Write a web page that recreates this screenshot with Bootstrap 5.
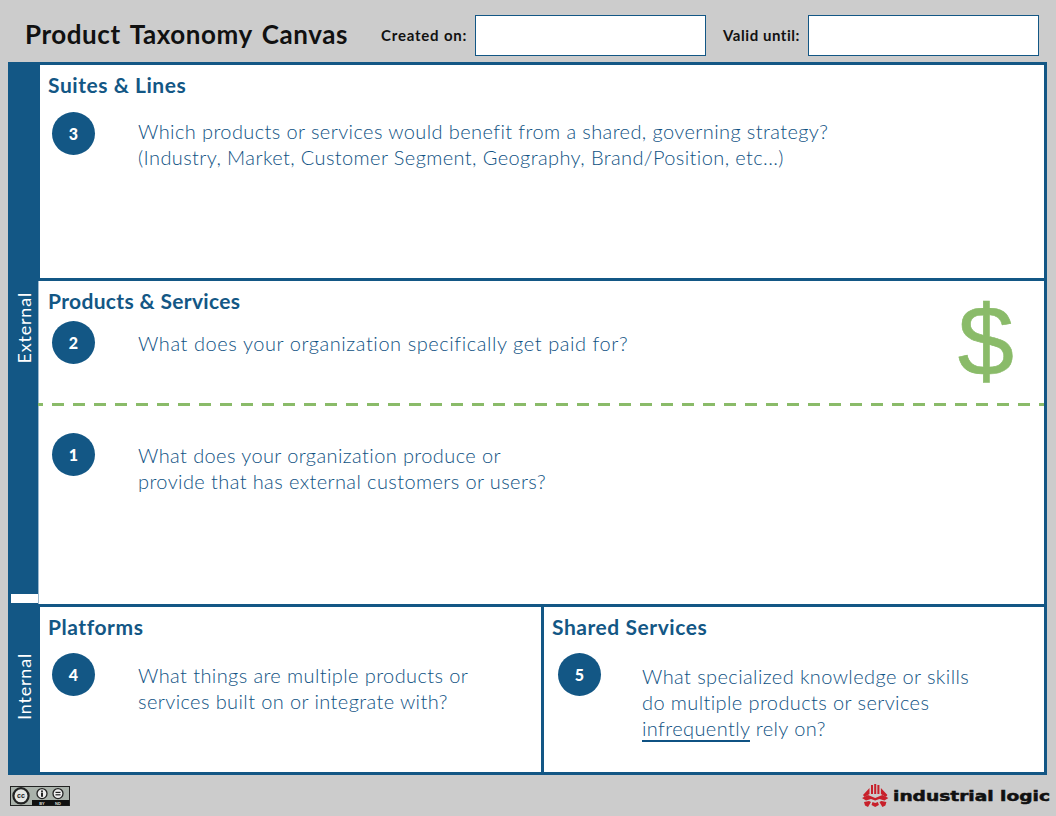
<!DOCTYPE html>
<html lang="en">
<head>
<meta charset="utf-8">
<title>Product Taxonomy Canvas</title>
<link href="https://cdn.jsdelivr.net/npm/bootstrap@5.3.0/dist/css/bootstrap.min.css" rel="stylesheet">
<style>
html,body{height:100%}
body{background:#ccc;font-family:"Lato",sans-serif;color:#135785;width:1056px;height:816px;overflow:hidden}
.tc-head{height:62px;padding:15px 9px 0 25px}
.tc-title{font-size:26px;font-weight:700;color:#111;letter-spacing:.55px;word-spacing:3px;margin:0;line-height:38px;width:339px;flex:none;white-space:nowrap}
.tc-lab{font-size:15px;font-weight:700;color:#111;line-height:40px;white-space:nowrap;flex:none}
.tc-lab1{width:111px;padding-left:17px;letter-spacing:.8px}
.tc-lab2{width:102px;padding-left:17px;letter-spacing:.55px}
.tc-inp{width:231px;height:41px;border:1px solid #135785;background:#fff;border-radius:0;padding:0 8px;flex:none}
.tc-frame{margin-left:8px;width:1039px;height:713px;border:3px solid #135785;background:#fff}
.tc-rail{width:27px;background:#135785;color:#fff}
.tc-rail-lab{writing-mode:vertical-rl;transform:rotate(180deg);font-size:18px;letter-spacing:.8px;line-height:27px;padding-top:3px}
.tc-notch{height:9px;background:#fff;flex:none}
.tc-ext{height:529px}
.tc-int{height:169px}
.tc-top{height:216px;border-left:2px solid #135785;border-bottom:3px solid #135785;padding:7px 0 0 8px}
.tc-mid1{height:122px;padding:7px 0 0 9px;border-left:1px solid #9cb9cf}
.tc-mid2{height:198px;padding:27px 0 0 9px;border-left:1px solid #9cb9cf}
.tc-dash{height:3px;flex:none;background-image:linear-gradient(to right,#8abb69 12px,transparent 12px);background-size:21px 3px;background-position:-7px 0;background-repeat:repeat-x}
.tc-bot{height:168px;border-top:3px solid #135785;border-left:2px solid #135785}
.tc-pl{width:504px;padding:7px 0 0 8px;border-right:3px solid #135785}
.tc-ss{flex:1;padding:7px 0 0 8px}
.tc-h{font-size:21px;font-weight:700;letter-spacing:.55px;line-height:26px;margin:0;color:#135785}
.tc-h-tight{letter-spacing:.33px}
.tc-circ{width:43px;height:43px;border-radius:50%;background:#135785;color:#fff;font-weight:900;font-size:16px;flex:none;margin-left:4px}
.tc-q{font-size:20px;font-weight:300;line-height:26px;letter-spacing:.4px;margin:0 0 0 43px;white-space:nowrap;color:#0f5283}
.tc-q u{text-underline-offset:4px}
.tc-dollar{font-family:"Liberation Sans",sans-serif;font-size:101px;line-height:90px;color:#8abb69;-webkit-text-stroke:.6px #8abb69;margin:7px 30px 0 0}
.tc-r3{margin-top:14px}.tc-r3 .tc-q{margin-top:6px}
.tc-r2{margin-top:7px}.tc-r2 .tc-q{margin-top:9px;letter-spacing:.57px}
.tc-r1 .tc-q{margin-top:9px}
.tc-r4{margin-top:13px}.tc-r4 .tc-q{margin-top:9px}
.tc-r5{margin-top:13px;margin-left:2px}.tc-r5 .tc-q{margin-top:10px;margin-left:41px}
.tc-foot{height:41px;padding:11px 4px 0 10px}
</style>
</head>
<body>
<header class="tc-head d-flex align-items-start">
  <h1 class="tc-title">Product Taxonomy Canvas</h1>
  <span class="tc-lab tc-lab1">Created on:</span>
  <input class="tc-inp" type="text" aria-label="Created on">
  <span class="tc-lab tc-lab2">Valid until:</span>
  <input class="tc-inp" type="text" aria-label="Valid until">
</header>
<main class="tc-frame d-flex">
  <div class="tc-rail d-flex flex-column flex-shrink-0">
    <div class="tc-ext d-flex align-items-center justify-content-center"><span class="tc-rail-lab">External</span></div>
    <div class="tc-notch"></div>
    <div class="tc-int flex-grow-1 d-flex align-items-center justify-content-center"><span class="tc-rail-lab">Internal</span></div>
  </div>
  <div class="flex-grow-1 d-flex flex-column">
    <section class="tc-top flex-none">
      <h2 class="tc-h">Suites &amp; Lines</h2>
      <div class="tc-r3 d-flex align-items-start">
        <div class="tc-circ d-flex align-items-center justify-content-center">3</div>
        <p class="tc-q">Which products or services would benefit from a shared, governing strategy?<br>(Industry, Market, Customer Segment, Geography, Brand/Position, etc...)</p>
      </div>
    </section>
    <section class="tc-mid1 d-flex justify-content-between">
      <div>
        <h2 class="tc-h tc-h-tight">Products &amp; Services</h2>
        <div class="tc-r2 d-flex align-items-start">
          <div class="tc-circ d-flex align-items-center justify-content-center">2</div>
          <p class="tc-q">What does your organization specifically get paid for?</p>
        </div>
      </div>
      <div class="tc-dollar">$</div>
    </section>
    <div class="tc-dash"></div>
    <section class="tc-mid2">
      <div class="tc-r1 d-flex align-items-start">
        <div class="tc-circ d-flex align-items-center justify-content-center">1</div>
        <p class="tc-q">What does your organization produce or<br>provide that has external customers or users?</p>
      </div>
    </section>
    <div class="tc-bot d-flex flex-grow-1">
      <section class="tc-pl">
        <h2 class="tc-h">Platforms</h2>
        <div class="tc-r4 d-flex align-items-start">
          <div class="tc-circ d-flex align-items-center justify-content-center">4</div>
          <p class="tc-q">What things are multiple products or<br>services built on or integrate with?</p>
        </div>
      </section>
      <section class="tc-ss">
        <h2 class="tc-h">Shared Services</h2>
        <div class="tc-r5 d-flex align-items-start">
          <div class="tc-circ d-flex align-items-center justify-content-center">5</div>
          <p class="tc-q">What specialized knowledge or skills<br>do multiple products or services<br><u>infrequently</u> rely on?</p>
        </div>
      </section>
    </div>
  </div>
</main>
<footer class="tc-foot d-flex justify-content-between align-items-start">
  <svg width="60" height="20" viewBox="0 0 60 20" role="img" aria-label="CC BY-ND">
    <rect x=".5" y=".5" width="59" height="19" fill="#aab2ab" stroke="#222"/>
    <rect x="22" y="14" width="37" height="5.5" fill="#111"/>
    <circle cx="11" cy="9.8" r="7.6" fill="#e4e6e4" stroke="#222" stroke-width="2.2"/>
    <text x="11" y="12.2" text-anchor="middle" font-family="Liberation Sans" font-weight="700" font-size="7" fill="#222">cc</text>
    <circle cx="32" cy="7.6" r="5" fill="#eee" stroke="#222" stroke-width="1.3"/>
    <circle cx="32" cy="5.2" r="1" fill="#222"/><rect x="31" y="6.6" width="2" height="4.2" fill="#222"/>
    <circle cx="48" cy="7.6" r="5" fill="#eee" stroke="#222" stroke-width="1.3"/>
    <rect x="45.5" y="5.8" width="5" height="1.2" fill="#222"/><rect x="45.5" y="8.2" width="5" height="1.2" fill="#222"/>
    <text x="32" y="18.6" text-anchor="middle" font-family="Liberation Sans" font-size="4" font-weight="700" fill="#ddd">BY</text>
    <text x="48" y="18.6" text-anchor="middle" font-family="Liberation Sans" font-size="4" font-weight="700" fill="#ddd">ND</text>
  </svg>
  <svg width="190" height="26" viewBox="0 0 190 26" role="img" aria-label="industrial logic" style="margin-top:-3px">
    <g fill="#c8202a">
      <rect x="9" y="2" width="2" height="9"/><rect x="12.200" y="1" width="2" height="10"/><rect x="15.400" y="2" width="2" height="9"/>
      <path d="M7.500 5v6l-5 3-1.500-2zM18.900 5v6l5 3 1.500-2z"/>
      <path d="M0 15l6-3 7.200 3 7.200-3 6 3-4 2.500-5-1.500-4.200 1.500-4.200-1.500-5 1.500z"/>
      <path d="M2 19l5-1 2 1-3 5-3-1.500zM24.400 19l-5-1-2 1 3 5 3-1.500z"/>
      <path d="M10.500 19l2.700 1 2.700-1 1 3-3.700 2-3.700-2z"/>
    </g>
    <text x="31" y="18" font-family="DejaVu Sans" font-weight="700" font-size="14" fill="#111" stroke="#111" stroke-width=".5" textLength="157" lengthAdjust="spacingAndGlyphs">industrial logic</text>
  </svg>
</footer>
<script src="https://cdn.jsdelivr.net/npm/bootstrap@5.3.0/dist/js/bootstrap.bundle.min.js"></script>
</body>
</html>
